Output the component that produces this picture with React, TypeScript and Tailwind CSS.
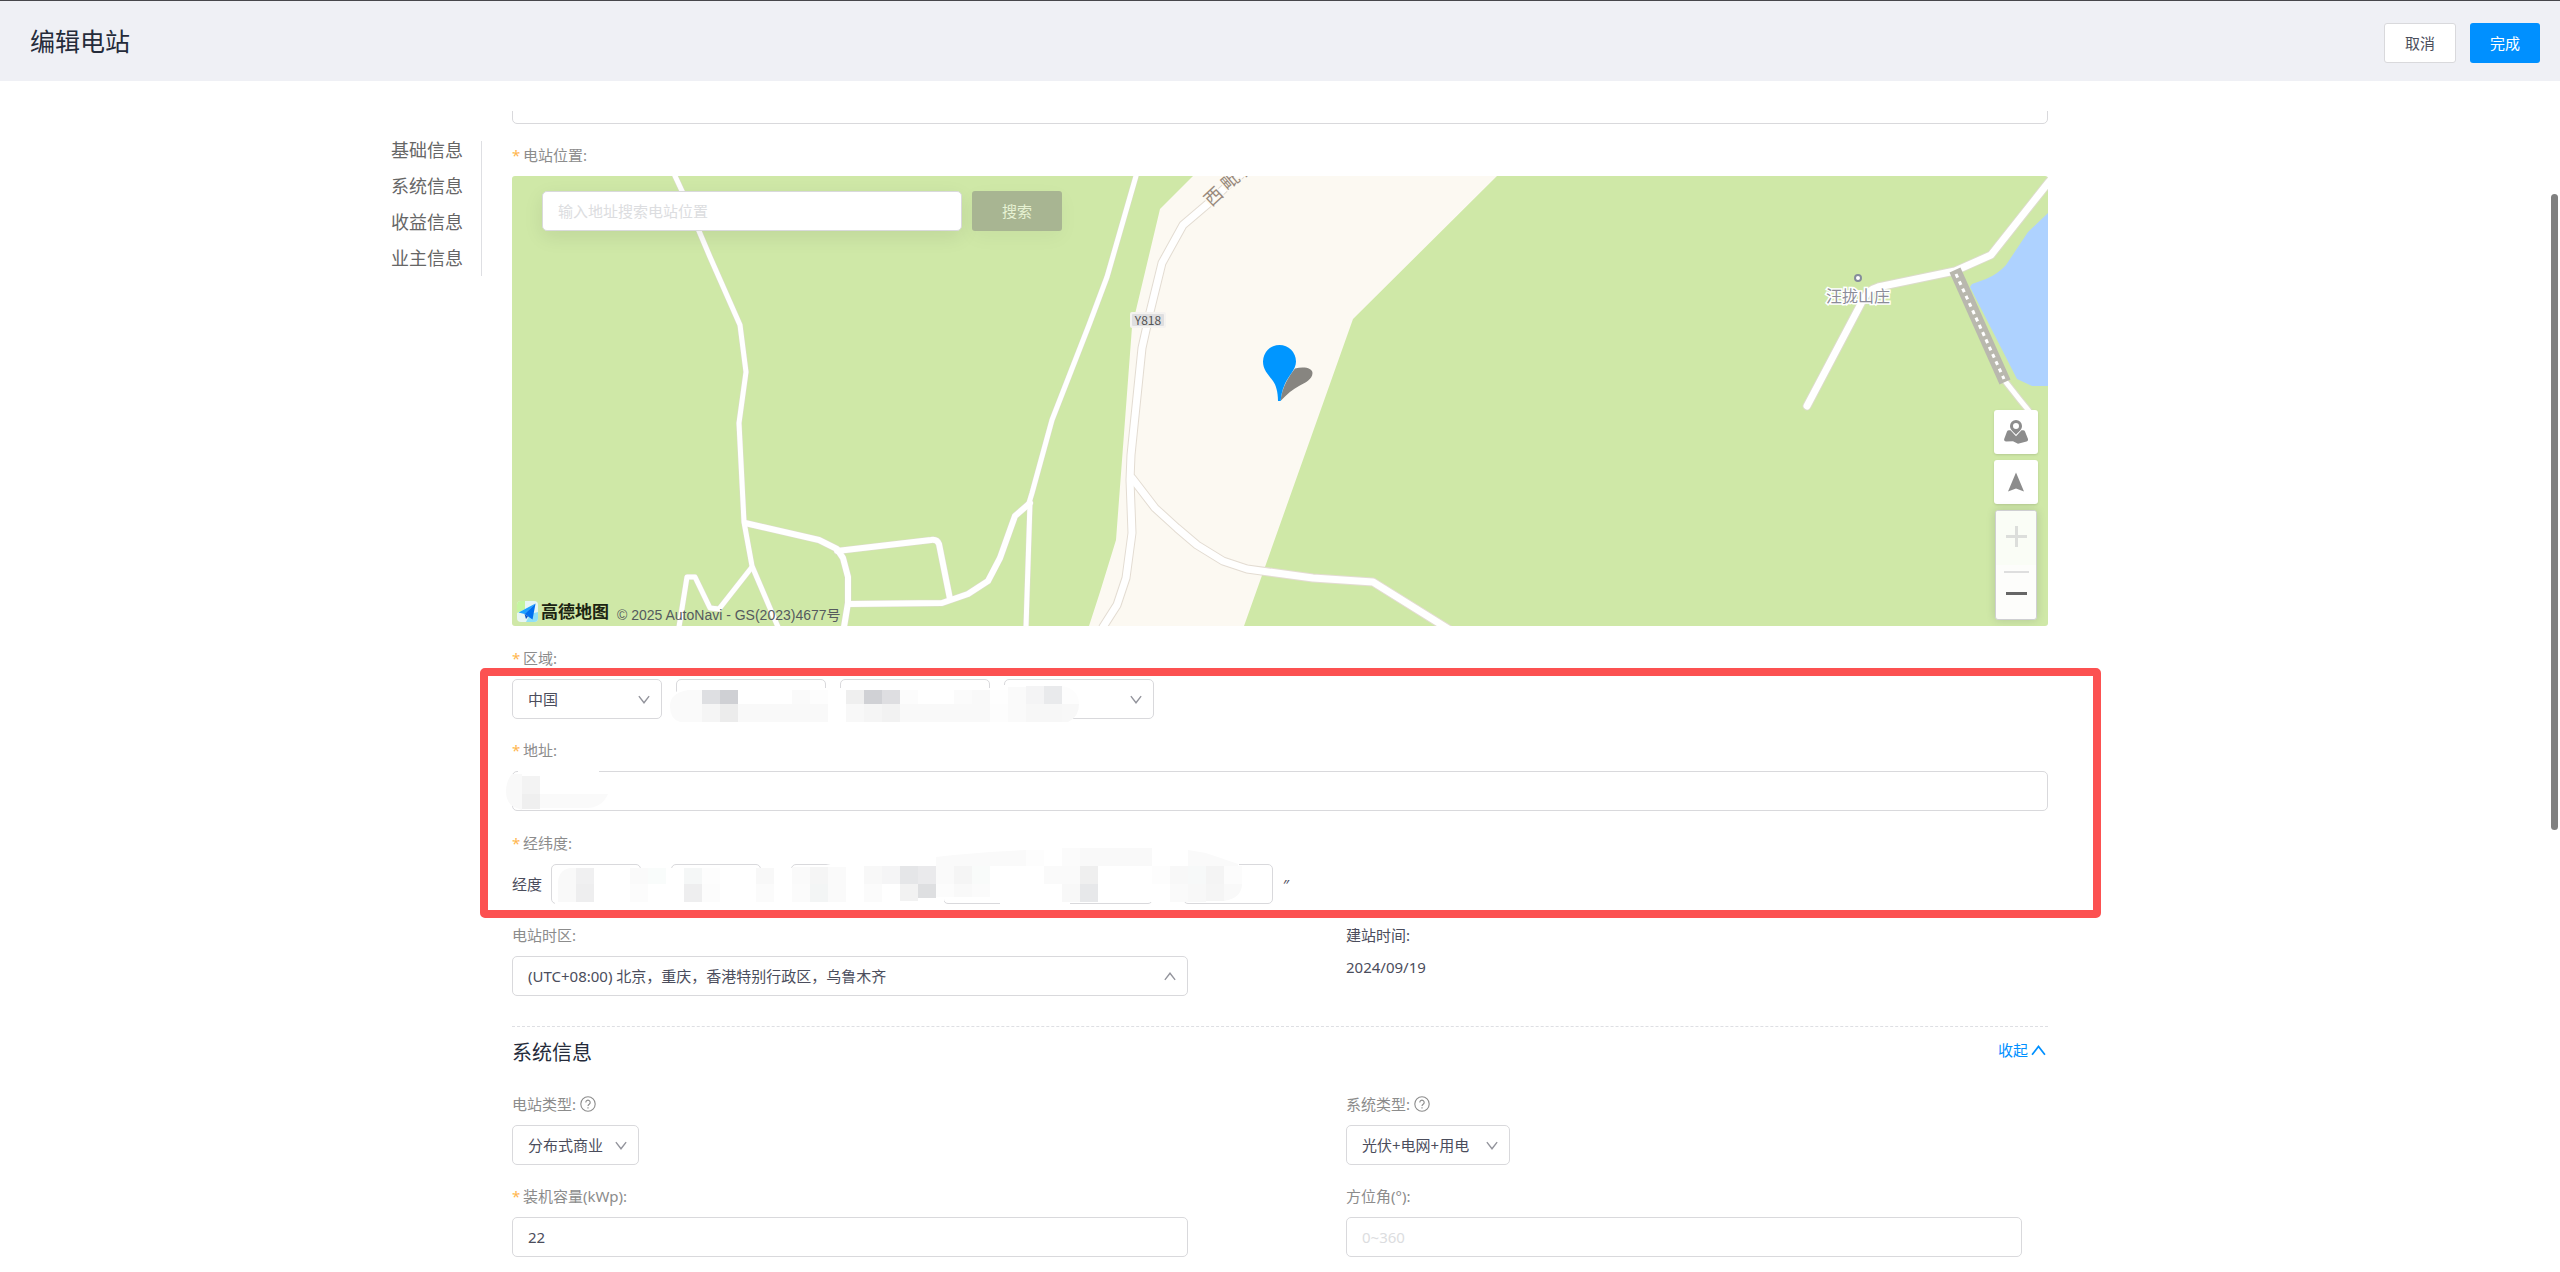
import { useState, type ReactNode } from 'react';

const NAV_ITEMS = [
    { id: 'basic', label: '基础信息' },
    { id: 'system', label: '系统信息' },
    { id: 'income', label: '收益信息' },
    { id: 'owner', label: '业主信息' },
];

const CONTROL =
    'h-10 rounded-[5px] border border-[#d9d9dc] bg-white px-[15px] text-[15px] text-[#4b4d5c] outline-none placeholder:text-[#dcdde0] focus:border-[#0090ff]';

// [x, y, width, height, fill]
type Cell = [number, number, number, number, string];

const REGION_CELLS: Cell[] = [
    [190, 11, 18, 14, '#dedfe2'],
    [208, 11, 18, 14, '#cfd0d4'],
    [280, 11, 18, 14, '#fafafa'],
    [298, 11, 18, 14, '#fdfdfd'],
    [334, 11, 18, 14, '#efefef'],
    [352, 11, 18, 14, '#d0d1d5'],
    [370, 11, 18, 14, '#dedee1'],
    [388, 11, 18, 14, '#fcfcfc'],
    [442, 11, 18, 14, '#fbfbfb'],
    [460, 11, 18, 14, '#f9f9f9'],
    [478, 11, 18, 14, '#fefefe'],
    [496, 8, 18, 17, '#fafafa'],
    [514, 7, 18, 18, '#f4f4f5'],
    [532, 7, 18, 18, '#e9eaec'],
    [190, 25, 18, 18, '#f5f5f5'],
    [208, 25, 18, 18, '#ececec'],
    [226, 25, 90, 18, '#f9f9f9'],
    [334, 25, 18, 18, '#f8f8f8'],
    [352, 25, 18, 18, '#f5f5f5'],
    [370, 25, 18, 18, '#f2f2f2'],
    [388, 25, 90, 18, '#f9f9f9'],
    [478, 25, 18, 18, '#fdfdfd'],
    [496, 25, 18, 18, '#fafafa'],
    [514, 25, 36, 18, '#f7f7f7'],
];

const COORD_CELLS: Cell[] = [
    [64, 4, 18, 16, '#f0f0f1'],
    [118, 4, 18, 16, '#fafafa'],
    [136, 4, 18, 16, '#f9fcfb'],
    [172, 4, 18, 16, '#f5f7f7'],
    [190, 4, 18, 16, '#fdfdfd'],
    [244, 4, 18, 16, '#f8f8f8'],
    [280, 3, 18, 17, '#fafafa'],
    [298, 3, 18, 17, '#f5f5f5'],
    [316, 3, 18, 17, '#fafafa'],
    [352, 2, 18, 18, '#f8f8f8'],
    [370, 2, 18, 18, '#f5f5f6'],
    [388, 2, 18, 18, '#e5e6e8'],
    [406, 2, 18, 18, '#eaeaec'],
    [424, 2, 18, 18, '#fafafa'],
    [442, 2, 18, 18, '#f5f5f5'],
    [460, 2, 18, 18, '#f9fbfa'],
    [532, 2, 36, 18, '#fafafa'],
    [568, 2, 18, 18, '#efefef'],
    [640, 2, 18, 18, '#fdfdfd'],
    [658, 2, 18, 18, '#f8f8f8'],
    [676, 2, 18, 18, '#f7f9f9'],
    [694, 2, 18, 18, '#f4f4f4'],
    [712, 2, 18, 18, '#fcfcfc'],
    [64, 20, 18, 18, '#eeeeef'],
    [118, 20, 18, 18, '#fcfcfc'],
    [172, 20, 18, 18, '#eeeeef'],
    [190, 20, 18, 18, '#fcfcfc'],
    [244, 20, 18, 18, '#fbfbfb'],
    [280, 20, 18, 18, '#fbfbfb'],
    [298, 20, 18, 18, '#f3f5f5'],
    [316, 20, 18, 18, '#fafafa'],
    [352, 20, 18, 18, '#fbfbfb'],
    [388, 20, 18, 17, '#f2f2f2'],
    [406, 20, 18, 14, '#dedfe1'],
    [424, 20, 18, 13, '#fcfcfc'],
    [442, 20, 18, 13, '#f9f9f9'],
    [460, 20, 18, 13, '#fbfbfb'],
    [550, 20, 18, 18, '#f8f8f8'],
    [568, 20, 18, 18, '#e7e8ea'],
    [658, 20, 18, 18, '#fafafa'],
    [676, 20, 18, 18, '#f8f8f8'],
    [694, 20, 18, 17, '#f5f5f5'],
];

function Chevron({ up = false, className = '' }: { up?: boolean; className?: string }) {
    return (
        <svg viewBox="0 0 14 10" fill="none" stroke="currentColor" strokeWidth="1.6" className={className} aria-hidden="true">
            <path d={up ? 'M1 9 7 1.2 13 9' : 'M1 1 7 8.8 13 1'} />
        </svg>
    );
}

interface SelectProps {
    id?: string;
    label?: string;
    value: string;
    width: string;
    up?: boolean;
}

function Select({ id, label, value, width, up }: SelectProps) {
    return (
        <div className={`relative ${width}`}>
            <select id={id} aria-label={label} defaultValue={value} className={`${CONTROL} block w-full appearance-none`}>
                <option value={value}>{value}</option>
            </select>
            <Chevron up={up} className="pointer-events-none absolute top-4 right-3 h-[9px] w-3 text-[#93949c]" />
        </div>
    );
}

interface FieldLabelProps {
    htmlFor?: string;
    required?: boolean;
    help?: boolean;
    children: ReactNode;
}

function FieldLabel({ htmlFor, required, help, children }: FieldLabelProps) {
    return (
        <div className="mb-[10px] flex h-[22px] items-center text-[15px] leading-[22px] text-[#8c8c8c]">
            {required && <span className="mr-1 w-[7px] text-[#ffb64d]">*</span>}
            <label htmlFor={htmlFor}>{children}</label>
            {help && (
                <svg viewBox="0 0 16 16" className="ml-1 h-4 w-4" fill="none" stroke="currentColor" aria-hidden="true">
                    <circle cx="8" cy="8" r="7.2" strokeWidth="1.1" />
                    <path d="M5.8 6.4a2.2 2.2 0 1 1 3.4 1.8C8.4 8.7 8 9 8 10" strokeWidth="1.1" />
                    <path d="M8 11.2v1.2" strokeWidth="1.2" />
                </svg>
            )}
        </div>
    );
}

function Cells({ cells }: { cells: Cell[] }) {
    return (
        <>
            {cells.map(([x, y, w, h, fill]) => (
                <rect key={`${x}-${y}`} x={x} y={y} width={w} height={h} fill={fill} />
            ))}
        </>
    );
}

function MapCanvas() {
    const tracks = [
        'M163 0 170 15 187 55 198 81 228 149 234 196 227 247 232 346 240 390 266 451',
        'M624 0 595 101 577 149 540 244 520 317 517 327',
        'M240 391 207 433 198 432 183 401 175 401 167 451',
        'M518 327 514 451',
    ];
    const lanes = [
        'M233 347 307 364 325 373 331 382 336 401 336 427 332 451',
        'M325 375 419 364Q425 363 427 368L438 423',
        'M336 428 430 427 456 418 476 405 488 382 503 340 518 327',
    ];
    const east = 'M1541 1 1536 7 1479 79 1443 95 1366 111Q1356 114 1352 122L1295 230';
    const mainRoad = 'M742 -12 716 9 698 26 671 49 650 87 638 136 630 172 619 279 618 304 620 357 614 402 605 429 591 451';
    const branch = 'M620 302 643 332 665 352 685 369 711 385 735 393 801 402 861 406 938 454';

    return (
        <svg
            viewBox="0 0 1536 450"
            preserveAspectRatio="xMidYMid slice"
            className="absolute inset-0 h-full w-full"
            fontFamily="'Noto Sans CJK SC', sans-serif"
            aria-hidden="true"
        >
            <rect width="1536" height="450" fill="#cfe8a7" />
            <path d="M681 0 648 33 624 134 620 151 604 364 588 416 577 450H732L841 143 985 0Z" fill="#fcf9f2" />
            <path d="M1536 37 1516 56 1494 89Q1486 98 1474 103L1460 108 1458 111 1505 203 1520 210H1536Z" fill="#aed2ff" />

            <g fill="none" strokeLinejoin="round" strokeLinecap="round">
                <g stroke="#dcdccb">
                    {tracks.map((d) => (
                        <path key={d} d={d} strokeWidth="6" />
                    ))}
                    {lanes.map((d) => (
                        <path key={d} d={d} strokeWidth="7" />
                    ))}
                    <path d={east} strokeWidth="9" />
                    <path d="M1493 205 1508 224 1517 235" strokeWidth="7" />
                </g>
                <g stroke="#e3dcd2">
                    <path d={branch} strokeWidth="9" />
                    <path d={mainRoad} strokeWidth="9" />
                </g>
                <g stroke="#ffffff">
                    {tracks.map((d) => (
                        <path key={d} d={d} strokeWidth="5" />
                    ))}
                    {lanes.map((d) => (
                        <path key={d} d={d} strokeWidth="6" />
                    ))}
                    <path d={east} strokeWidth="7" />
                    <path d="M1493 205 1508 224 1517 235" strokeWidth="5" />
                    <path d={branch} strokeWidth="7" />
                    <path d={mainRoad} strokeWidth="7" />
                </g>
            </g>
            <path d="M1443 94 1493 206" stroke="#b9b8ae" strokeWidth="12" />
            <path d="M1444 98 1492 203" stroke="#ffffff" strokeWidth="3" strokeDasharray="4 4" />

            <rect x="618" y="136" width="36" height="16" rx="2" fill="#f5f3f0" />
            <rect x="620" y="138" width="32" height="12" rx="1" fill="#dfdfe0" />
            <text x="636" y="149" textAnchor="middle" fontSize="12" fill="#555555">Y818</text>

            <g fontSize="18" textAnchor="middle" fill="#98897c" stroke="#fcf9f2" strokeWidth="3" paintOrder="stroke">
                <text transform="translate(701 20) rotate(-43)" y="7">西</text>
                <text transform="translate(718 4) rotate(-40)" y="7">毗</text>
                <text transform="translate(736 -9) rotate(-38)" y="7">线</text>
            </g>

            <circle cx="1346" cy="102" r="3" fill="#ffffff" stroke="#858c9b" strokeWidth="2" />
            <text x="1346" y="126" textAnchor="middle" fontSize="16" fill="#8b8c98" stroke="#ffffff" strokeWidth="3" paintOrder="stroke">
                汪拢山庄
            </text>

            <path
                d="M768.5 225C770 211 777 200 783 192.500C792 190 800.500 192 800.500 197 800.500 203 793 207 787 210 781 213 775 218 768.500 225Z"
                fill="#878580"
            />
            <path
                d="M751 185.500a16.500 16.500 0 0 1 33 0C784 194 776 200 772.500 209 770 215 769 220 768.700 225H766C766 216 764 209 761 205 756 198 751 194 751 185.500Z"
                fill="#0096ff"
            />
        </svg>
    );
}

function StationMap() {
    const [keyword, setKeyword] = useState('');

    return (
        <div className="relative h-[450px] overflow-hidden rounded-[3px]">
            <MapCanvas />

            <div className="absolute top-[15px] left-[30px] flex gap-[10px]">
                <input
                    aria-label="电站位置"
                    value={keyword}
                    onChange={(e) => setKeyword(e.target.value)}
                    placeholder="输入地址搜索电站位置"
                    className={`${CONTROL} w-[420px] shadow-[0_6px_20px_rgba(0,0,0,0.08)]`}
                />
                <button type="button" className="h-10 w-[90px] rounded-[3px] bg-[#a8b592] text-[15px] text-[#e6f2d3] shadow-[0_6px_20px_rgba(0,0,0,0.04)]">
                    搜索
                </button>
            </div>

            <div className="absolute right-[10px] bottom-[6px] flex w-11 flex-col gap-[6px]">
                <button type="button" title="地图" className="flex h-11 items-center justify-center rounded-[3px] bg-white text-[#8c8c8c] shadow">
                    <svg viewBox="0 0 24 24" className="h-6 w-6" fill="currentColor" aria-hidden="true">
                        <path d="M3 11.500Q3.500 10.200 5 10.200H6.500L12 16.200 17.500 10.200H19Q20.500 10.200 21 11.500L24 19Q24.300 21 22.500 21.600L14 23.800 9 21.200 2 21.600Q-.3 21.600 .2 19Z" />
                        <path
                            fillRule="evenodd"
                            d="M12 0a6 6 0 0 1 6 6C18 9.500 15 11.500 12 14.800 9 11.500 6 9.500 6 6a6 6 0 0 1 6-6Zm0 3a3 3 0 1 0 0 6 3 3 0 0 0 0-6Z"
                        />
                    </svg>
                </button>
                <button type="button" title="定位" className="flex h-11 items-center justify-center rounded-[3px] bg-white text-[#8c8c8c] shadow">
                    <svg viewBox="0 0 16 20" className="h-5 w-4" fill="currentColor" aria-hidden="true">
                        <path d="M8 .5 16 19.500 8 16.500 0 19.500Z" />
                    </svg>
                </button>
                <div className="mx-px flex h-[110px] flex-col items-center overflow-hidden rounded-[3px] border border-[#cfcfd2] bg-[#fdfdfb] shadow-[0_0_10px_rgba(0,0,60,0.14)]">
                    <button type="button" title="放大" className="flex h-[54px] w-full items-start justify-center bg-[#fafdf6] pt-[15px] text-[#dcdedb]">
                        <svg viewBox="0 0 21 21" className="h-[21px] w-[21px]" stroke="currentColor" strokeWidth="3" aria-hidden="true">
                            <path d="M0 10.500H21M10.500 0V21" />
                        </svg>
                    </button>
                    <span className="mt-[6px] h-[2px] w-[25px] bg-[#dedede]" />
                    <button type="button" title="缩小" className="flex h-10 w-full items-center justify-center text-[#666666]">
                        <svg viewBox="0 0 21 3" className="h-[3px] w-[21px]" fill="currentColor" aria-hidden="true">
                            <rect width="21" height="3" />
                        </svg>
                    </button>
                </div>
            </div>

            <div className="absolute bottom-0 left-[5px] flex items-end">
                <svg viewBox="0 0 21 21" className="mb-1 h-[21px] w-[21px]" aria-hidden="true">
                    <rect width="21" height="21" rx="4" fill="#e8f6f4" />
                    <path d="M0 4a4 4 0 0 1 4-4H8V8L0 12Z" fill="#c5f59f" />
                    <path d="M9 21 13 13 21 11V17a4 4 0 0 1-4 4Z" fill="#8fe0f8" />
                    <path d="M18.500 2.500 1.500 11.500 7.500 13Z" fill="#1ba1ff" />
                    <path d="M18.500 2.500 7.500 13 15.500 18.500Z" fill="#0070f0" />
                    <path d="M7.500 13 9 18 11 15.400Z" fill="#0a4fc0" />
                </svg>
                <span className="ml-[3px] text-[17px] leading-7 font-bold text-[#1c2412]">高德地图</span>
                <span className="ml-2 font-['Liberation_Sans','Noto_Sans_CJK_SC',sans-serif] text-[14px] leading-[22px] text-[#555a5e]">
                    © 2025 AutoNavi - GS(2023)4677号
                </span>
            </div>
        </div>
    );
}

function RegionRow() {
    return (
        <div className="relative mb-5 flex gap-[14px]">
            <Select id="region" value="中国" width="w-[150px]" />
            <Select label="省" value="" width="w-[150px]" />
            <Select label="市" value="" width="w-[150px]" />
            <Select label="区" value="" width="w-[150px]" />
            <svg width="580" height="46" className="pointer-events-none absolute top-0 left-0" aria-hidden="true">
                <path d="M176 9H492V6H550Q567 10 567 24 567 38 554 43H176Q158 40 158 25 158 11 176 9Z" fill="#ffffff" />
                <path d="M190 11H176Q158 14 158 27 158 40 168 43H190Z" fill="#fafafa" />
                <path d="M550 7Q567 10 567 25H550Z" fill="#fdfdfd" />
                <path d="M550 25H567Q567 38 556 43H550Z" fill="#f8f8f8" />
                <Cells cells={REGION_CELLS} />
            </svg>
        </div>
    );
}

function AddressRow() {
    return (
        <div className="relative mb-[21px]">
            <input id="address" className={`${CONTROL} block w-full`} />
            <svg width="120" height="44" viewBox="-10 -2 120 44" className="pointer-events-none absolute -top-[2px] -left-[10px]" aria-hidden="true">
                <path d="M6 -2H87V30L70 38H10L-2 32V3H6Z" fill="#ffffff" />
                <path d="M10 3H0Q-6 10 -6 20 -6 32 2 36L10 39Z" fill="#f9f9f9" />
                <path d="M28 23H96Q90 37 74 37H28Z" fill="#fafafa" />
                <rect x="10" y="5" width="18" height="18" fill="#f3f3f3" />
                <rect x="10" y="23" width="18" height="15" fill="#efefef" />
            </svg>
        </div>
    );
}

const DMS_UNITS = [
    { name: '度', mark: '°' },
    { name: '分', mark: '′' },
    { name: '秒', mark: '″' },
];

function DmsInputs({ axis }: { axis: string }) {
    return (
        <>
            {DMS_UNITS.map(({ name, mark }, i) => (
                <span key={name} className="flex items-center">
                    <input id={i === 0 ? axis : undefined} aria-label={`${axis}${name}`} className={`${CONTROL} w-[90px]`} />
                    <span className="w-[30px] pl-[10px]">{mark}</span>
                </span>
            ))}
        </>
    );
}

function CoordinateRow() {
    return (
        <div className="relative mb-5 flex items-center text-[15px] text-[#4b4d5c]">
            <label htmlFor="经度" className="mr-[9px]">经度</label>
            <DmsInputs axis="经度" />
            <label htmlFor="纬度" className="mr-[2px]">纬度</label>
            <DmsInputs axis="纬度" />
            <svg width="760" height="66" viewBox="0 -18 760 66" className="pointer-events-none absolute -top-[18px] left-0" aria-hidden="true">
                <path d="M43 10Q43 4 52 4H300L328 -2 424 -8 514 -18H676L727 -2V10Q731 28 712 36H671V33H641V38H558V41H488V36H470L466 32H432V41H43Z" fill="#ffffff" />
                <path d="M64 4H58Q46 6 46 20V38H64Z" fill="#f9f9f9" />
                <path d="M424 2V-7L442 -9 478 -12 514 -14V2Z" fill="#fafafa" />
                <rect x="514" y="-14" width="18" height="16" fill="#fdfdfd" />
                <rect x="550" y="-16" width="18" height="18" fill="#fbfbfb" />
                <rect x="568" y="-16" width="72" height="18" fill="#f9f9f9" />
                <path d="M676 2V-14L694 -11 726 0V2Z" fill="#fafafa" />
                <path d="M712 20H730Q730 34 712 37Z" fill="#f9f9f9" />
                <Cells cells={COORD_CELLS} />
            </svg>
        </div>
    );
}

export default function App() {
    const [expanded, setExpanded] = useState(true);

    return (
        <div className="relative flex h-screen flex-col overflow-hidden bg-white font-['Noto_Sans','Noto_Sans_CJK_SC',sans-serif] text-[15px] text-[#4b4d5c]">
            <header className="flex h-[81px] shrink-0 items-center justify-between border-t border-[#47474b] bg-[#eff0f5] pr-5 pl-[30px]">
                <h1 className="text-[25px] leading-9 text-[#252b3a]">编辑电站</h1>
                <div className="flex gap-[14px] pt-1">
                    <button type="button" className="h-10 w-[72px] rounded-[3px] border border-[#d9d9dc] bg-white">
                        取消
                    </button>
                    <button type="button" className="h-10 w-[70px] rounded-[3px] bg-[#0090ff] text-white">
                        完成
                    </button>
                </div>
            </header>

            <div className="mt-[30px] grid min-h-0 flex-1 grid-cols-[20%_60%_20%] overflow-hidden">
                <nav className="flex items-start justify-end pt-[30px] pr-[30px]">
                    <ul className="flex flex-col gap-[18px] border-r border-[#dedfe3] pr-[18px] pb-[9px] text-[18px] leading-[18px] text-[#666666]">
                        {NAV_ITEMS.map((item) => (
                            <li key={item.id}>
                                <a href={`#${item.id}`}>{item.label}</a>
                            </li>
                        ))}
                    </ul>
                </nav>

                <main className="min-w-0">
                    <input aria-label="电站名称" className={`${CONTROL} -mt-[27px] mb-5 block w-full`} />

                    <FieldLabel required>电站位置:</FieldLabel>
                    <StationMap />

                    <div className="relative mt-[21px]">
                        <FieldLabel htmlFor="region" required>区域:</FieldLabel>
                        <RegionRow />
                        <FieldLabel htmlFor="address" required>地址:</FieldLabel>
                        <AddressRow />
                        <FieldLabel htmlFor="经度" required>经纬度:</FieldLabel>
                        <CoordinateRow />
                        <div className="pointer-events-none absolute top-[21px] -right-[53px] bottom-[-14px] -left-8 rounded-[5px] border-8 border-[#fc5151]" />
                    </div>

                    <div className="grid grid-cols-2 gap-x-[158px] pr-[26px]">
                        <div>
                            <FieldLabel htmlFor="timezone">电站时区:</FieldLabel>
                            <Select id="timezone" value="(UTC+08:00) 北京，重庆，香港特别行政区，乌鲁木齐" width="w-full" up />
                        </div>
                        <div className="leading-[22px]">
                            <p className="mb-[10px]">建站时间:</p>
                            <p>2024/09/19</p>
                        </div>
                    </div>

                    <section id="system" className="mt-[30px] border-t border-dashed border-[#dedfe3]">
                        <div className="mb-[26px] flex items-start justify-between pt-3">
                            <h2 className="text-[20px] leading-7 text-[#252b3a]">系统信息</h2>
                            <button
                                type="button"
                                onClick={() => setExpanded(!expanded)}
                                className="flex items-center gap-[3px] pr-[2px] leading-[22px] text-[#0090ff]"
                            >
                                {expanded ? '收起' : '展开'}
                                <Chevron up={expanded} className="h-[11px] w-[15px]" />
                            </button>
                        </div>

                        {expanded && (
                            <div className="grid grid-cols-2 gap-x-[158px] gap-y-5 pr-[26px]">
                                <div>
                                    <FieldLabel htmlFor="station-type" help>电站类型:</FieldLabel>
                                    <Select id="station-type" value="分布式商业" width="w-[127px]" />
                                </div>
                                <div>
                                    <FieldLabel htmlFor="system-type" help>系统类型:</FieldLabel>
                                    <Select id="system-type" value="光伏+电网+用电" width="w-[164px]" />
                                </div>
                                <div>
                                    <FieldLabel htmlFor="capacity" required>装机容量(kWp):</FieldLabel>
                                    <input id="capacity" defaultValue="22" className={`${CONTROL} block w-full`} />
                                </div>
                                <div>
                                    <FieldLabel htmlFor="azimuth">方位角(°):</FieldLabel>
                                    <input id="azimuth" placeholder="0~360" className={`${CONTROL} block w-full`} />
                                </div>
                            </div>
                        )}
                    </section>
                </main>
            </div>

            {/* overlay scrollbar thumb */}
            <div className="absolute top-[194px] right-[2px] h-1/2 w-[7px] rounded-full bg-[#808080]" />
        </div>
    );
}
